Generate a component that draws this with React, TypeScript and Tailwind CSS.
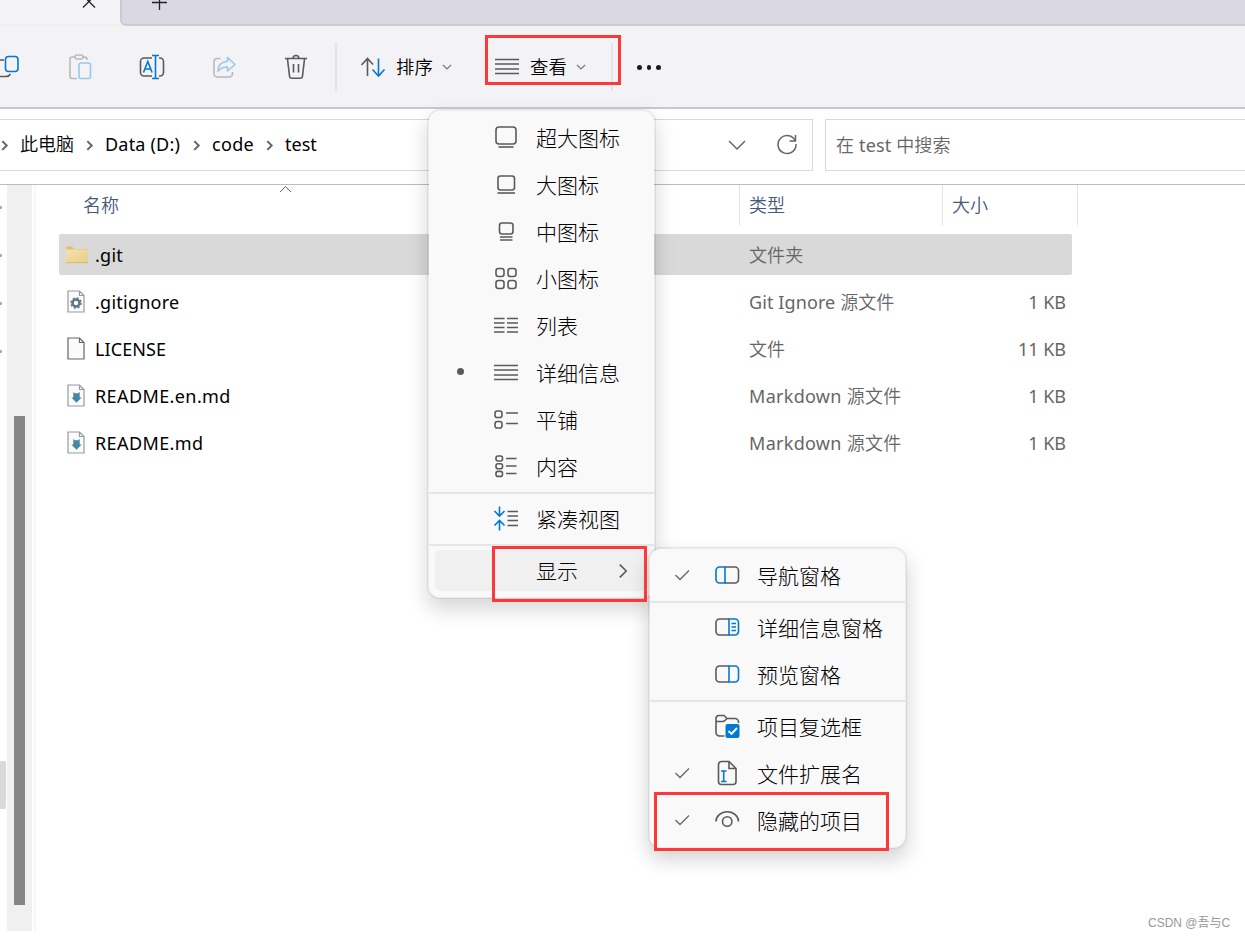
import type { ReactNode } from "react";

const INK = "#5a5a5a";
const BLUE = "#0078d4";

function Icon({ children, size = 26 }: { children: ReactNode; size?: number }) {
  return (
    <svg width={size} height={size} viewBox={`0 0 ${size} ${size}`} fill="none" stroke={INK} strokeWidth="1.6" className="block shrink-0">
      {children}
    </svg>
  );
}

function Chevron({ dir, className, weight = 1.4 }: { dir: "right" | "down"; className: string; weight?: number }) {
  return (
    <svg viewBox="0 0 10 10" fill="none" stroke="currentColor" strokeWidth={weight} className={className}>
      <path vectorEffect="non-scaling-stroke" d={dir === "right" ? "M3 1l4 4-4 4" : "M1 3l4 4 4-4"} />
    </svg>
  );
}

/* Latin runs are set one weight heavier than the light CJK glyphs beside them. */
function Mixed({ text }: { text: string }) {
  return (
    <>
      {text.split(/([\x20-\x7e]+)/).map((part, i) =>
        i % 2 ? <span key={i} className="font-normal">{part}</span> : part,
      )}
    </>
  );
}

const icons = {
  extraLarge: <Icon><rect x="3" y="2" width="20" height="17" rx="3" /><path d="M5.5 22h15" /></Icon>,
  large: <Icon><rect x="5" y="4" width="16.5" height="14" rx="2.5" /><path d="M4.5 21h17.5" /></Icon>,
  medium: <Icon><rect x="6.5" y="4" width="13.5" height="11" rx="2.5" /><path d="M7 18h12.5M7 21h12.5" /></Icon>,
  small: (
    <Icon>
      <rect x="3" y="2.5" width="8" height="8" rx="2.5" /><rect x="15" y="2.5" width="8" height="8" rx="2.5" />
      <rect x="3" y="14.5" width="8" height="8" rx="2.5" /><rect x="15" y="14.5" width="8" height="8" rx="2.5" />
    </Icon>
  ),
  list: <Icon><path d="M1 5.500h10.500M14 5.500h11M1 10h10.500M14 10h11M1 14.500h10.500M14 14.500h11M1 19h10.500M14 19h11" /></Icon>,
  details: <Icon><path d="M1 5.500h24M1 10h24M1 15h24M1 19.500h24" /></Icon>,
  tiles: <Icon><rect x="2" y="4" width="7" height="6.500" rx="2.300" /><rect x="2" y="14.500" width="7" height="6.500" rx="2.300" /><path d="M13 6h12M13 16.500h12" /></Icon>,
  content: (
    <Icon>
      <rect x="3" y="2" width="6.500" height="5" rx="2" /><rect x="3" y="9.700" width="6.500" height="5" rx="2" /><rect x="3" y="17.400" width="6.500" height="5" rx="2" />
      <path d="M13 4.500h10.500M13 12h10.500M13 19.500h10.500" />
    </Icon>
  ),
  compact: (
    <Icon>
      <path stroke={BLUE} d="M6.500 0.500v9M1.500 5l5 5 5-5M6.500 24.500v-9M1.500 19.500l5-5 5 5" />
      <path d="M14.500 5.500h10.500M14.500 10h10.500M14.500 14.500h10.500M14.500 19.500h10.500" />
    </Icon>
  ),
  navPane: <Icon><path d="M11 5h10a3.500 3.500 0 0 1 3.500 3.500v9a3.500 3.500 0 0 1-3.500 3.500h-10" /><path stroke={BLUE} d="M11 5H5.500a3.500 3.500 0 0 0-3.500 3.500v9a3.500 3.500 0 0 0 3.500 3.500h5.500z" /></Icon>,
  detailsPane: <Icon><path d="M15 5H5.500a3.500 3.500 0 0 0-3.500 3.500v9a3.500 3.500 0 0 0 3.500 3.500h9.500" /><path stroke={BLUE} d="M15 5h6a3.500 3.500 0 0 1 3.500 3.500v9a3.500 3.500 0 0 1-3.500 3.500h-6zM17.500 9.500h4.500M17.500 13h4.500M17.500 16.500h4.500" /></Icon>,
  previewPane: <Icon><path d="M15 5H5.500a3.500 3.500 0 0 0-3.500 3.500v9a3.500 3.500 0 0 0 3.500 3.500h9.500" /><path stroke={BLUE} d="M15 5h6a3.500 3.500 0 0 1 3.500 3.500v9a3.500 3.500 0 0 1-3.500 3.500h-6z" /></Icon>,
  checkBoxes: (
    <Icon>
      <path d="M10.500 23H5.500a3.500 3.500 0 0 1-3.500-3.500v-14A3 3 0 0 1 5 2.500h5l3 3h8a3.500 3.500 0 0 1 3.500 3.500v1M2 8.500h6.500q1.500 0 2.500-1l2-2" />
      <rect x="11.500" y="11" width="14" height="14" rx="2" fill={BLUE} stroke="none" />
      <path stroke="#fff" strokeWidth="1.900" d="M14.500 18l3 3 5.500-6" />
    </Icon>
  ),
  extensions: (
    <Icon>
      <path d="M7 1.500h8l7 7v13a3 3 0 0 1-3 3H7.500a3 3 0 0 1-3-3V4.500a3 3 0 0 1 3-3M15 1.500v7h7" />
      <path stroke={BLUE} d="M7 11h5.500M7 21.500h5.500M9.700 11v10.500" />
    </Icon>
  ),
  eye: <Icon><path d="M2 14.500a11 9.500 0 0 1 22.500 0" /><circle cx="13.200" cy="14.500" r="4.700" /></Icon>,
};

type Entry = { label: string; icon?: ReactNode; mark?: "dot" | "check"; hot?: boolean; sep?: boolean };

const viewMenu: Entry[] = [
  { label: "超大图标", icon: icons.extraLarge },
  { label: "大图标", icon: icons.large },
  { label: "中图标", icon: icons.medium },
  { label: "小图标", icon: icons.small },
  { label: "列表", icon: icons.list },
  { label: "详细信息", icon: icons.details, mark: "dot" },
  { label: "平铺", icon: icons.tiles },
  { label: "内容", icon: icons.content },
  { label: "紧凑视图", icon: icons.compact, sep: true },
  { label: "显示", hot: true, sep: true },
];

const showMenu: Entry[] = [
  { label: "导航窗格", icon: icons.navPane, mark: "check" },
  { label: "详细信息窗格", icon: icons.detailsPane, sep: true },
  { label: "预览窗格", icon: icons.previewPane },
  { label: "项目复选框", icon: icons.checkBoxes, sep: true },
  { label: "文件扩展名", icon: icons.extensions, mark: "check" },
  { label: "隐藏的项目", icon: icons.eye, mark: "check" },
];

function MenuRows({ entries, raised = false }: { entries: Entry[]; raised?: boolean }) {
  return (
    <>
      {entries.map((e) => (
        <div key={e.label}>
          {e.sep && <div className="mt-[2px] mb-px h-[2px] bg-[#e6e6e6]" />}
          <div className="h-[47px] px-[6px] py-[3px]">
            <div className={`flex h-[41px] items-center rounded-md ${e.hot ? "bg-[#f0f0f0]" : ""}`}>
              <div className="flex w-[58px] shrink-0 justify-center pr-[7px]">
                {e.mark === "dot" && <span className="mb-[2px] size-[7px] rounded-full bg-[#5a5a5a]" />}
                {e.mark === "check" && (
                  <svg width="16" height="12" viewBox="0 0 16 12" fill="none" stroke="#666" strokeWidth="1.300" className="mb-[2px]"><path d="M1.500 6l4.500 4.500L15 1.500" /></svg>
                )}
              </div>
              <div className={`h-[26px] w-[26px] shrink-0 ${raised ? "mb-px" : ""}`}>{e.icon}</div>
              <span className="ml-[17px] whitespace-nowrap pt-px text-[21px] leading-6 font-light text-black">{e.label}</span>
              {e.hot && <Chevron dir="right" weight={1.6} className="mr-[17px] ml-auto size-4 text-[#5a5a5a]" />}
            </div>
          </div>
        </div>
      ))}
    </>
  );
}

function FileIcon({ kind }: { kind: string }) {
  if (kind === "folder") {
    return (
      <svg width="24" height="20" viewBox="0 0 24 20" className="block">
        <defs><linearGradient id="fold" x1="0" y1="0" x2="1" y2="1"><stop offset="0" stopColor="#f3e0ae" /><stop offset="1" stopColor="#e8cf87" /></linearGradient></defs>
        <path d="M1 3a1.500 1.500 0 0 1 1.500-1.500H7L9 4h14v3H1z" fill="#e3c26c" />
        <rect x="1" y="4.500" width="22" height="13.500" rx="0.800" fill="url(#fold)" />
        <path d="M1 17.700h22" stroke="#dcb965" />
      </svg>
    );
  }
  const edge = kind === "file" ? "#666" : "#999";
  return (
    <svg width="18" height="23" viewBox="0 0 18 23" fill="none" className="mr-[2px] block">
      <path d="M1 1h11.500L17 5.500V22H1z" fill="#fbfbfd" stroke={edge} strokeWidth="1.200" />
      <path d="M12.500 1v4.500H17" stroke={edge} strokeWidth="1.200" />
      {kind === "gear" && (
        <g stroke="#61737c">
          <circle cx="9" cy="13" r="3.500" strokeWidth="2.500" />
          <circle cx="9" cy="13" r="5" strokeWidth="1.500" strokeDasharray="2 1.927" />
        </g>
      )}
      {kind === "md" && <path d="M6.300 8l1.500 1.200h3.400L12.700 8v5.500h2L9.500 18.700 4.300 13.500h2z" fill="#4387a4" />}
    </svg>
  );
}

const files = [
  { name: ".git", kind: "folder", type: "文件夹", size: "" },
  { name: ".gitignore", kind: "gear", type: "Git Ignore 源文件", size: "1 KB" },
  { name: "LICENSE", kind: "file", type: "文件", size: "11 KB" },
  { name: "README.en.md", kind: "md", type: "Markdown 源文件", size: "1 KB" },
  { name: "README.md", kind: "md", type: "Markdown 源文件", size: "1 KB" },
];

function nameSpacing(kind: string) {
  if (kind === "md") return "tracking-[0.4px]";
  return kind === "file" ? "tracking-[0.1px]" : "tracking-[0.25px]";
}

function Toolbar() {
  return (
    <div className="flex h-[83px] items-center border-b-2 border-[#c8c8d3] bg-[#f3f3f6]">
      <div className="-ml-[28px] flex shrink-0">
        <div className="flex w-[72px] justify-center"><Icon><path d="M9 6H5a3 3 0 0 0-3 3v10a3.500 3.500 0 0 0 3.500 3.500H11q3 0 4.500-2.500" /><rect x="10.500" y="2.500" width="12.500" height="15" rx="3" stroke={BLUE} /></Icon></div>
        <div className="flex w-[72px] justify-center">
          <Icon><path stroke="#b9b9bb" d="M8 3H5A2 2 0 0 0 3 5v17.500A2 2 0 0 0 5 24.500h5M16 3h1.500A2.500 2.500 0 0 1 20 5.500V6" /><rect x="8" y="1" width="8" height="4" rx="2" stroke="#b9b9bb" /><rect x="12" y="9" width="11.500" height="15.500" rx="2" stroke="#9ac8ed" /></Icon>
        </div>
        <div className="flex w-[72px] justify-center">
          <Icon><path d="M13 4H5a3.500 3.500 0 0 0-3.500 3.500v11A3.500 3.500 0 0 0 5 22h8M20 4h1a3.500 3.500 0 0 1 3.500 3.500v11A3.500 3.500 0 0 1 21 22h-1" /><path stroke={BLUE} d="M13 1.500h7M13 24.500h7M16.500 1.500v23M4.500 18.500l4.300-11 4.300 11M6 15h5.500" /></Icon>
        </div>
        <div className="flex w-[72px] justify-center">
          <Icon><path stroke="#b9b9bb" d="M9.500 4.500H6A3 3 0 0 0 3 7.500v12A3.500 3.500 0 0 0 6.500 23h11.500A3.500 3.500 0 0 0 21.500 19.500V18" /><path stroke="#9ac8ed" strokeLinejoin="round" d="M16.500 3.500l7.500 7-7.500 6.500v-4q-6-.2-9.500 4.300 0-9 9.500-10z" /></Icon>
        </div>
        <div className="flex w-[72px] justify-center">
          <Icon><path d="M2 4.500h22M10 4.500a3 3 0 0 1 6 0M4.500 5l2 17a2.500 2.500 0 0 0 2.500 2.300h8a2.500 2.500 0 0 0 2.500-2.300l2-17M10.500 10v8.500M15.500 10v8.500" /></Icon>
        </div>
      </div>
      <div className="ml-[3px] h-12 w-[2px] bg-[#e5e5e9]" />
      <div className="ml-[23px] flex items-center">
        <Icon><path d="M7.500 22V4.500M1.500 11l6-6.500 5.500 6" /><path stroke={BLUE} d="M18.500 4.500V22M12.500 15.500l6 6.500 6-6.500" /></Icon>
        <span className="ml-[10px] w-[37px] whitespace-nowrap text-[18.400px] leading-6">排序</span>
        <Chevron dir="down" weight={1.2} className="ml-[9px] size-[10px] text-[#777]" />
      </div>
      <div className="ml-[42px] flex items-center">
        {icons.details}
        <span className="ml-[10px] w-[38px] whitespace-nowrap text-[18.400px] leading-6">查看</span>
        <Chevron dir="down" weight={1.2} className="ml-[8px] size-[10px] text-[#777]" />
      </div>
      <div className="ml-[25px] h-12 w-[2px] bg-[#e5e5e9]" />
      <div className="ml-[24px] flex gap-[5px] pt-[2px]">
        <i className="size-[4.500px] rounded-full bg-[#1a1a1a]" /><i className="size-[4.500px] rounded-full bg-[#1a1a1a]" /><i className="size-[4.500px] rounded-full bg-[#1a1a1a]" />
      </div>
    </div>
  );
}

export default function App() {
  return (
    <div className="relative h-[938px] w-full overflow-hidden bg-white font-['Noto_Sans','Noto_Sans_CJK_SC',sans-serif] text-[18px] font-[350] text-black">
      <div className="flex h-[26px] bg-[#f3f3f6]">
        <div className="flex w-[120px] items-start justify-end border-b border-[#ececef] pr-[24px]">
          <svg width="14" height="10" viewBox="0 0 14 10" stroke="#222" strokeWidth="1.300"><path d="M1-4.500L13 7.500M13-4.500L1 7.500" /></svg>
        </div>
        <div className="flex flex-1 items-start rounded-bl-md border-b-2 border-l-2 border-[#cbcad4] bg-[#dad9e3] pl-[29px]">
          <svg width="17" height="11" viewBox="0 0 17 11" stroke="#222" strokeWidth="1.300"><path d="M1 2.500h15M8.500 0v10" /></svg>
        </div>
      </div>
      <Toolbar />

      <div className="flex h-[75px] gap-3 pt-[10px]">
        <div className="flex h-[52px] w-[813px] shrink-0 items-center border border-l-0 border-[#d9d9d9] text-[#666]">
          <Chevron dir="right" weight={2} className="-ml-px size-[11px]" />
          <span className="mb-[2px] ml-[10px] w-[54px] whitespace-nowrap text-black">此电脑</span>
          <Chevron dir="right" weight={2} className="ml-[10px] size-[11px]" />
          <span className="mb-[2px] ml-[10px] w-[77px] whitespace-nowrap font-normal tracking-[0.200px] text-black">Data (D:)</span>
          <Chevron dir="right" weight={2} className="ml-[9px] size-[11px]" />
          <span className="mb-[2px] ml-[10px] w-[43px] whitespace-nowrap font-normal tracking-[0.300px] text-black">code</span>
          <Chevron dir="right" weight={2} className="ml-[9px] size-[11px]" />
          <span className="mb-[2px] ml-[10px] whitespace-nowrap font-normal text-black">test</span>
          <Chevron dir="down" weight={1.5} className="mb-px ml-auto size-5" />
          <svg width="22" height="22" viewBox="0 0 22 22" fill="none" stroke="#666" strokeWidth="1.500" className="mr-[14px] mb-[2px] ml-[29px]">
            <path d="M19.500 8.500A9 9 0 1 0 20 11M19.500 2v6h-6" />
          </svg>
        </div>
        <div className="flex h-[52px] flex-1 items-center border border-r-0 border-[#d9d9d9] pl-[10px] text-[#666]"><span className="tracking-[0.150px]"><Mixed text="在 test 中搜索" /></span></div>
      </div>

      <div className="flex h-[747px] border-t border-[#bcbcbc]">
        <div className="w-[7px] shrink-0">
          <div className="flex flex-col gap-[45px] pt-[21px]">
            <i className="h-[3px] w-[2px] rounded-r bg-[#9aa3a3]" /><i className="h-[3px] w-[2px] rounded-r bg-[#9aa3a3]" /><i className="h-[3px] w-[2px] rounded-r bg-[#9aa3a3]" /><i className="h-[3px] w-[2px] rounded-r bg-[#9aa3a3]" />
          </div>
          <div className="mt-[408px] h-12 w-[6px] rounded-r-[2px] bg-[#d9d9d9]" />
        </div>
        <div className="w-[25px] shrink-0 bg-[#f0f0f0] pt-[231px]"><div className="ml-[7px] h-[489px] w-[11px] bg-[#858585]" /></div>
        <div className="ml-[2px] w-[2px] shrink-0 bg-[#f7f7f7]" />
        <div className="w-[1042px] shrink-0">
          <div className="flex h-[40px] text-[#47597a]">
            <div className="relative w-[704px] border-r border-[#e2e2e2] pt-[7px] pl-[47px]">
              名称
              <svg width="13" height="8" viewBox="0 0 13 8" fill="none" stroke="#666" className="absolute top-0 left-[243px]"><path d="M1 7l5.500-5.500L12 7" /></svg>
            </div>
            <div className="w-[203px] border-r border-[#e2e2e2] pt-[7px] pl-[9px]">类型</div>
            <div className="w-[135px] border-r border-[#e2e2e2] pt-[7px] pl-[9px]">大小</div>
          </div>
          <div className="pt-[6px] pl-[23px]">
            {files.map((f, i) => (
              <div key={f.name} className="h-[47px] pt-[3px]">
                <div className={`flex h-[41px] w-[1013px] items-center rounded-[2px] pr-[6px] ${i === 0 ? "bg-[#d9d9d9]" : ""}`}>
                  <div className="flex w-[36px] shrink-0 justify-center">
                    <FileIcon kind={f.kind} />
                  </div>
                  <span className={`w-[654px] whitespace-nowrap pt-[2px] font-normal ${nameSpacing(f.kind)}`}>{f.name}</span>
                  <span className={`whitespace-nowrap pt-[2px] text-[#666] ${f.kind === "md" ? "tracking-[0.3px]" : "tracking-[0.1px]"}`}><Mixed text={f.type} /></span>
                  <span className="ml-auto whitespace-nowrap pt-[2px] font-normal text-[#666]">{f.size}</span>
                </div>
              </div>
            ))}
          </div>
        </div>
      </div>

      <div className="absolute top-[109px] left-[427px] h-[490px] w-[229px] rounded-[13px] border-2 border-black/7 bg-[#f9f9f9] bg-clip-padding pt-[3px] shadow-[0_10px_20px_rgba(0,0,0,0.16)]">
        <MenuRows entries={viewMenu} />
      </div>
      <div className="absolute top-[547px] left-[648px] h-[302px] w-[259px] rounded-[13px] border-2 border-black/7 bg-[#f9f9f9] bg-clip-padding pt-[3px] shadow-[0_10px_20px_rgba(0,0,0,0.18)]">
        <MenuRows entries={showMenu} raised />
      </div>

      <div className="absolute top-[35px] left-[485px] h-[50px] w-[136px] border-3 border-[#fc3838]" />
      <div className="absolute top-[546px] left-[492px] h-[56px] w-[155px] border-3 border-[#fc3838]" />
      <div className="absolute top-[792px] left-[654px] h-[59px] w-[235px] border-3 border-[#fc3838]" />
      <div className="absolute top-[914px] left-[1148px] font-['Liberation_Sans','Noto_Sans_CJK_SC',sans-serif] text-[12px] leading-[18px] font-normal whitespace-nowrap text-[#999]">CSDN @吾与C</div>
    </div>
  );
}
